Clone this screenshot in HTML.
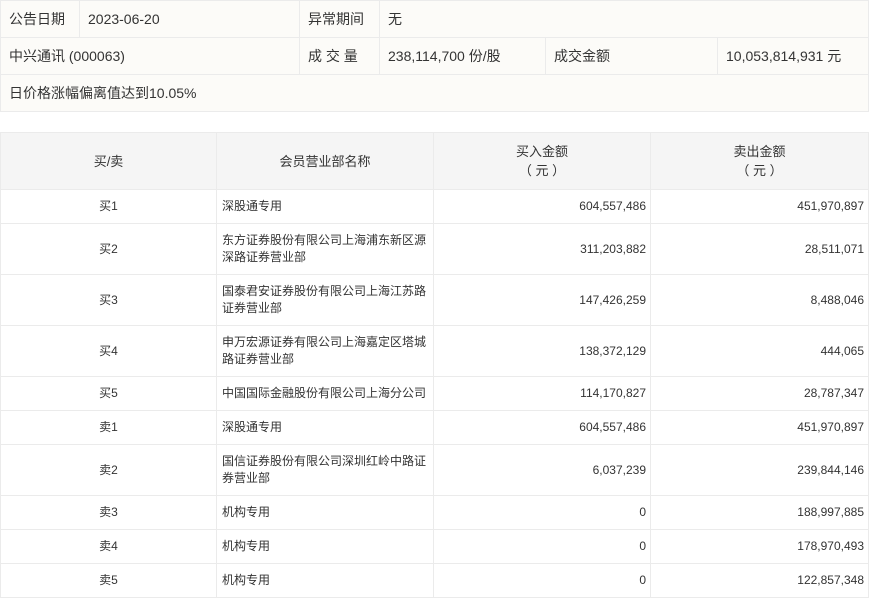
<!DOCTYPE html>
<html><head><meta charset="utf-8"><style>
body{margin:0;background:#fff;font-family:"Liberation Sans","Noto Sans CJK SC",sans-serif;color:#333;}
table{border-collapse:collapse;table-layout:fixed;position:absolute;left:0;}
td{border:1px solid #ebebeb;padding:0;}
#t1{top:0;width:868px;background:#fcfbf8;font-size:14px;}
#t1 td{height:36px;padding-left:8px;}
#t2{top:132px;width:868px;font-size:12px;line-height:17px;}
#t2 th{background:#f5f5f5;border:1px solid #ebebeb;font-weight:normal;font-size:13px;height:54px;line-height:19px;}
#t2 td{height:33px;}
#t2 tr.d td{height:50px;}
.c{text-align:center}.l{padding-left:5px!important}.r{text-align:right;padding-right:4px!important}
</style></head><body>
<table id="t1">
<col style="width:79px"><col style="width:220px"><col style="width:80px"><col style="width:166px"><col style="width:172px"><col style="width:151px">
<tr><td>公告日期</td><td>2023-06-20</td><td>异常期间</td><td colspan="3">无</td></tr>
<tr><td colspan="2">中兴通讯 (000063)</td><td>成 交 量</td><td>238,114,700 份/股</td><td>成交金额</td><td>10,053,814,931 元</td></tr>
<tr><td colspan="6">日价格涨幅偏离值达到10.05%</td></tr>
</table>
<table id="t2">
<col style="width:216px"><col style="width:217px"><col style="width:217px"><col style="width:218px">
<tr><th>买/卖</th><th>会员营业部名称</th><th>买入金额<br>（ 元 ）</th><th>卖出金额<br>（ 元 ）</th></tr>
<tr><td class="c">买1</td><td class="l">深股通专用</td><td class="r">604,557,486</td><td class="r">451,970,897</td></tr>
<tr class="d"><td class="c">买2</td><td class="l">东方证券股份有限公司上海浦东新区源深路证券营业部</td><td class="r">311,203,882</td><td class="r">28,511,071</td></tr>
<tr class="d"><td class="c">买3</td><td class="l">国泰君安证券股份有限公司上海江苏路证券营业部</td><td class="r">147,426,259</td><td class="r">8,488,046</td></tr>
<tr class="d"><td class="c">买4</td><td class="l">申万宏源证券有限公司上海嘉定区塔城路证券营业部</td><td class="r">138,372,129</td><td class="r">444,065</td></tr>
<tr><td class="c">买5</td><td class="l">中国国际金融股份有限公司上海分公司</td><td class="r">114,170,827</td><td class="r">28,787,347</td></tr>
<tr><td class="c">卖1</td><td class="l">深股通专用</td><td class="r">604,557,486</td><td class="r">451,970,897</td></tr>
<tr class="d"><td class="c">卖2</td><td class="l">国信证券股份有限公司深圳红岭中路证券营业部</td><td class="r">6,037,239</td><td class="r">239,844,146</td></tr>
<tr><td class="c">卖3</td><td class="l">机构专用</td><td class="r">0</td><td class="r">188,997,885</td></tr>
<tr><td class="c">卖4</td><td class="l">机构专用</td><td class="r">0</td><td class="r">178,970,493</td></tr>
<tr><td class="c">卖5</td><td class="l">机构专用</td><td class="r">0</td><td class="r">122,857,348</td></tr>
</table>
</body></html>
